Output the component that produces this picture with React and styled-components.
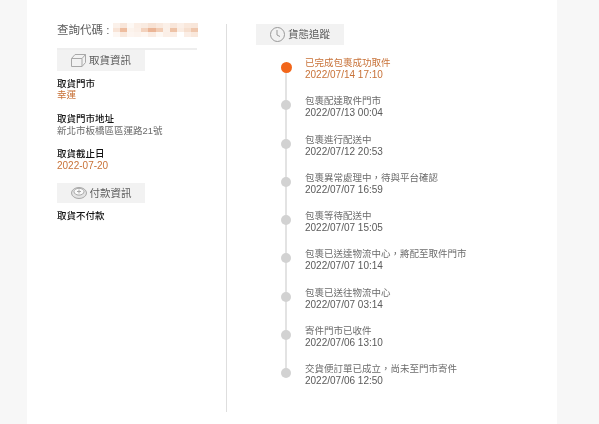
import React from "react";
import styled, { createGlobalStyle } from "styled-components";

const Global = createGlobalStyle`
  html, body { margin: 0; padding: 0; background: #f7f7f7; }
  body { font-family: "Liberation Sans", "Noto Sans CJK TC", sans-serif; }
`;
const Page = styled.div`
  width: 599px; height: 424px; overflow: hidden; background: #f7f7f7;
  padding-left: 27px; box-sizing: border-box;
`;
const Panel = styled.div`
  width: 530px; height: 424px; background: #fff; box-sizing: border-box;
  padding: 24px 0 0 30px; display: flex; align-items: flex-start; filter: blur(.3px);
`;
const LeftCol = styled.div`
  width: 140px; margin: -1px 29px 0 0; flex: none;
`;
const CodeRow = styled.div`
  display: flex; align-items: center; justify-content: space-between; height: 14px; box-sizing: content-box;
  font-size: 11.5px; color: #5c5c5c; line-height: 14px; white-space: nowrap;
  padding-bottom: 11px; border-bottom: 2px solid #eeeeee;
`;
const Mosaic = styled.div`
  width: 85px; height: 14px; flex: none; display: grid; margin-right: -1px;
  grid-template-columns: repeat(12, 1fr); grid-template-rows: repeat(3, 1fr); filter: blur(.5px);
`;
const Tile = styled.span`background: ${p => p.$c};`;
const SectionHead = styled.div`
  width: 88px; height: 20.5px; background: #f2f2f2; display: flex; align-items: center; justify-content: center;
  gap: 3px; font-size: 10.5px; line-height: 12px; color: #5e5e5e; margin-top: ${p => p.$t || 0}px;
`;
const Info = styled.div`margin-top: ${p => p.$t}px;`;
const Label = styled.div`font-size: 9.5px; line-height: 11.5px; font-weight: 500; color: #111;`;
const Value = styled.div`
  font-size: ${p => p.$num ? 10 : 9.5}px; line-height: 11.5px; color: ${p => p.$accent ? "#c87238" : "#6c6c6c"};
`;
const Divider = styled.div`width: 1px; height: 388px; background: #dedede; flex: none;`;
const RightCol = styled.div`margin-left: 29px; flex: 1;`;
const Timeline = styled.div`
  position: relative; margin-top: 12.5px; padding-left: 49px; display: flex; flex-direction: column;
`;
const Rail = styled.div`
  position: absolute; left: 29px; top: 11px; width: 2px; height: 305px; background: #e3e3e3;
`;
const Step = styled.div`
  position: relative; height: 38.25px; font-size: 9.5px; line-height: 12px; color: ${p => p.$active ? "#c87238" : "#6c6c6c"};
`;
const Dot = styled.div`
  position: absolute; border-radius: 50%;
  left: ${p => p.$active ? -24.5 : -24}px; top: ${p => p.$active ? 4.5 : 5}px;
  width: ${p => p.$active ? 11 : 10}px; height: ${p => p.$active ? 11 : 10}px;
  background: ${p => p.$active ? "#f2661a" : "#d2d2d2"};
`;
const Time = styled.div`
  font-size: 10px; line-height: 12px; color: ${p => p.$active ? "#c87238" : "#5a5a5a"};
`;

const BoxIcon = () => (
  <svg width="15" height="13" viewBox="0 0 15 13" fill="none" stroke="#a8a8a8" strokeWidth="1">
    <path d="M.5 4.5h10.5v8H.5zM.5 4.5L4 .5h10.5L11 4.5M14.5 .5v8L11 12.5" />
  </svg>
);
const CoinIcon = () => (
  <svg width="16" height="12" viewBox="0 0 16 12" fill="none" stroke="#a8a8a8" strokeWidth="1">
    <ellipse cx="8" cy="6" rx="7.5" ry="5.5" fill="#e4e4e4" />
    <ellipse cx="8" cy="4.7" rx="5" ry="3.4" fill="#fafafa" />
    <path d="M8 2.5v4M6 4.5h4" />
  </svg>
);
const ClockIcon = () => (
  <svg width="15" height="15" viewBox="0 0 15 15" fill="none" stroke="#999" strokeWidth="1">
    <circle cx="7.5" cy="7.5" r="7" />
    <path d="M7 3v5l3 1.5" />
  </svg>
);

const tones = [
  "#fbf1ea","#f8e6da","#fdf8f4","#fbeee5","#f9ebe1","#f7e2d4","#f9e9de","#fbf0e8","#f8e6da","#fbefe7","#f9e8dc","#f8e6da",
  "#f8e4d7","#eebd9f","#fcf3ec","#fbefe7","#f3d2bd","#ebb596","#f2cdb5","#fbf0e8","#eec3a7","#faece2","#f6dfcf","#efc7ad",
  "#fdf7f3","#f9e9de","#fdf5f0","#fcf3ed","#fdf6f1","#faece3","#fdf8f4","#fbefe7","#fbeee6","#ffffff","#fbeee6","#f9e8dc",
];
const steps = [
  ["已完成包裹成功取件", "2022/07/14 17:10", true],
  ["包裹配達取件門市", "2022/07/13 00:04"],
  ["包裹進行配送中", "2022/07/12 20:53"],
  ["包裹異常處理中，待與平台確認", "2022/07/07 16:59"],
  ["包裹等待配送中", "2022/07/07 15:05"],
  ["包裹已送達物流中心，將配至取件門市", "2022/07/07 10:14"],
  ["包裹已送往物流中心", "2022/07/07 03:14"],
  ["寄件門市已收件", "2022/07/06 13:10"],
  ["交貨便訂單已成立，尚未至門市寄件", "2022/07/06 12:50"],
];

export default function App() {
  return (
    <Page>
      <Global />
      <Panel>
        <LeftCol>
          <CodeRow>
            查詢代碼 :
            <Mosaic>{tones.map((c, i) => <Tile key={i} $c={c} />)}</Mosaic>
          </CodeRow>
          <SectionHead><BoxIcon />取貨資訊</SectionHead>
          <Info $t={7}><Label>取貨門市</Label><Value $accent>幸運</Value></Info>
          <Info $t={12.5}><Label>取貨門市地址</Label><Value>新北市板橋區區運路21號</Value></Info>
          <Info $t={12}><Label>取貨截止日</Label><Value $accent $num>2022-07-20</Value></Info>
          <SectionHead $t={11.5}><CoinIcon />付款資訊</SectionHead>
          <Info $t={6.75}><Label>取貨不付款</Label></Info>
        </LeftCol>
        <Divider />
        <RightCol>
          <SectionHead><ClockIcon />貨態追蹤</SectionHead>
          <Timeline>
            <Rail />
            {steps.map(([t, d, a]) => (
              <Step key={d} $active={a}>
                <Dot $active={a} />
                {t}
                <Time $active={a}>{d}</Time>
              </Step>
            ))}
          </Timeline>
        </RightCol>
      </Panel>
    </Page>
  );
}
